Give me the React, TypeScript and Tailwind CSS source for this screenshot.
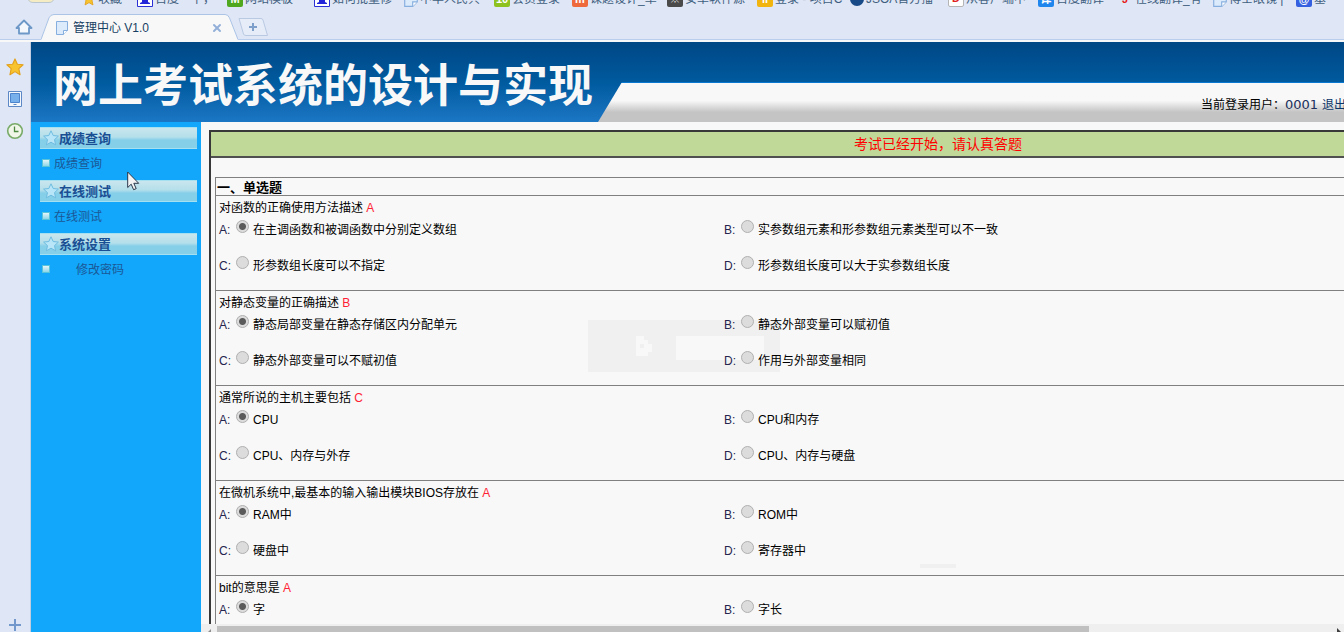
import type { ReactNode } from "react";
import { X } from "lucide-react";

interface Bookmark {
  label: string;
  width: string;
  icon: ReactNode;
}

interface Option {
  key: string;
  text: string;
}

interface Question {
  id: string;
  title: string;
  answer: string;
  options: Option[];
}

function StarIcon({ className = "" }: { className?: string }) {
  return (
    <svg viewBox="0 0 16 16" className={className} aria-hidden="true">
      <path
        d="M8 .8l2.1 4.7 5.1.5-3.8 3.5 1.1 5.3L8 12.1l-4.5 2.7 1.1-5.3L.8 6l5.1-.5z"
        fill="#f7c32e"
        stroke="#e3a11c"
        strokeWidth="1"
        strokeLinejoin="round"
      />
    </svg>
  );
}

function PageIcon({ className = "" }: { className?: string }) {
  return (
    <svg viewBox="0 0 12 14" className={className} aria-hidden="true">
      <path d="M.5.5h11v9l-4 4h-7z" fill="#dcebfb" stroke="#86aede" />
      <path d="M11.500 9.500h-4v4" fill="#fff" stroke="#86aede" />
    </svg>
  );
}

function PawIcon() {
  return (
    <svg viewBox="0 0 16 16" className="h-4 w-4">
      <path d="M.5.5h15v15H.5z" fill="#fff" stroke="#2b2fd6" />
      <path d="M5 8h6v3l2 1v1H3v-1l2-1z" fill="#2326d8" />
    </svg>
  );
}

function SquareIcon({ bg, children }: { bg: string; children?: ReactNode }) {
  return (
    <span className={`flex h-4 w-4 items-end justify-center rounded-xs text-[11px] font-bold leading-4 ${bg}`}>
      {children}
    </span>
  );
}

const BOOKMARKS: Bookmark[] = [
  { label: "收藏", width: "w-[55px]", icon: <StarIcon className="h-4 w-3.5" /> },
  { label: "百度一下，", width: "w-[90px]", icon: <PawIcon /> },
  { label: "网站模板", width: "w-[87px]", icon: <SquareIcon bg="bg-[#4fa81e] text-white">M</SquareIcon> },
  { label: "如何批量修", width: "w-[90px]", icon: <PawIcon /> },
  { label: "中华人民共", width: "w-[90px]", icon: <PageIcon className="h-4 w-3.5" /> },
  { label: "会员登录", width: "w-[78px]", icon: <SquareIcon bg="bg-[#8dc21f] text-white">10</SquareIcon> },
  { label: "课题设计_单", width: "w-[95px]", icon: <SquareIcon bg="bg-[#ee6a3c] text-white">m</SquareIcon> },
  { label: "安卓软件源", width: "w-[90px]", icon: <SquareIcon bg="bg-[#4a4a4a] text-[#cfcfcf]">※</SquareIcon> },
  { label: "登录 - 项目C", width: "w-[93px]", icon: <SquareIcon bg="bg-[#f2b50f] text-white">ıı</SquareIcon> },
  { label: "JSOA官方播", width: "w-[98px]", icon: <span className="block h-3.5 w-3.5 rounded-full bg-[#174a86]" /> },
  { label: "从客户端中", width: "w-[90px]", icon: <SquareIcon bg="border border-[#b5b5b5] bg-white text-[#e02020]">D</SquareIcon> },
  { label: "百度翻译", width: "w-[79px]", icon: <SquareIcon bg="bg-[#1f86ee] text-white">译</SquareIcon> },
  { label: "在线翻译_有", width: "w-[96px]", icon: <SquareIcon bg="text-[#e61c1c]">J</SquareIcon> },
  { label: "博士眼镜 |", width: "w-[83px]", icon: <PageIcon className="h-4 w-3.5" /> },
  { label: "基", width: "w-[48px]", icon: <SquareIcon bg="bg-[#3560e0] text-white">@</SquareIcon> },
];

const MENU = [
  { title: "成绩查询", item: "成绩查询", indent: "pl-1" },
  { title: "在线测试", item: "在线测试", indent: "pl-1" },
  { title: "系统设置", item: "修改密码", indent: "pl-[26px]" },
];

const QUESTIONS: Question[] = [
  {
    id: "q1",
    title: "对函数的正确使用方法描述",
    answer: "A",
    options: [
      { key: "A", text: "在主调函数和被调函数中分别定义数组" },
      { key: "B", text: "实参数组元素和形参数组元素类型可以不一致" },
      { key: "C", text: "形参数组长度可以不指定" },
      { key: "D", text: "形参数组长度可以大于实参数组长度" },
    ],
  },
  {
    id: "q2",
    title: "对静态变量的正确描述",
    answer: "B",
    options: [
      { key: "A", text: "静态局部变量在静态存储区内分配单元" },
      { key: "B", text: "静态外部变量可以赋初值" },
      { key: "C", text: "静态外部变量可以不赋初值" },
      { key: "D", text: "作用与外部变量相同" },
    ],
  },
  {
    id: "q3",
    title: "通常所说的主机主要包括",
    answer: "C",
    options: [
      { key: "A", text: "CPU" },
      { key: "B", text: "CPU和内存" },
      { key: "C", text: "CPU、内存与外存" },
      { key: "D", text: "CPU、内存与硬盘" },
    ],
  },
  {
    id: "q4",
    title: "在微机系统中,最基本的输入输出模块BIOS存放在",
    answer: "A",
    options: [
      { key: "A", text: "RAM中" },
      { key: "B", text: "ROM中" },
      { key: "C", text: "硬盘中" },
      { key: "D", text: "寄存器中" },
    ],
  },
  {
    id: "q5",
    title: "bit的意思是",
    answer: "A",
    options: [
      { key: "A", text: "字" },
      { key: "B", text: "字长" },
    ],
  },
];

function BrowserChrome() {
  return (
    <div className="shrink-0 bg-[#dfe6f5]">
      <nav className="flex h-3.5 items-end overflow-hidden pb-[7px]">
        <span className="mb-1 ml-[27px] mr-[27px] h-3 w-7 shrink-0 rounded-full border border-[#b9c6cf] bg-[#f6ecc4]" />
        {BOOKMARKS.map((b) => (
          <a
            key={b.label}
            href="#"
            className={`flex h-4 shrink-0 items-center gap-0.5 whitespace-nowrap text-[12px] leading-4 text-[#3f5f80] ${b.width}`}
          >
            {b.icon}
            {b.label}
          </a>
        ))}
      </nav>
      <div className="flex h-[26px] items-stretch border-b border-[#b9cdec]">
        <button type="button" aria-label="主页" className="flex w-[41px] items-center justify-end pr-2">
          <svg viewBox="0 0 18 16" className="h-4 w-[18px]">
            <path
              d="M9 1.5L1.5 9H4v5.500h10V9h2.500z"
              fill="#f4f8fd"
              stroke="#6d98c8"
              strokeWidth="1.800"
              strokeLinejoin="round"
            />
          </svg>
        </button>
        <div className="relative -mb-px flex w-[197px] items-center pl-[15px] pr-[15px] pt-0.5">
          <svg viewBox="0 0 197 27" className="absolute inset-0 h-full w-full" preserveAspectRatio="none">
            <path d="M0 26.500L8 4Q9.500 .5 13 .5H184Q187 .5 188.500 4L197 26.500V27H0z" fill="#f8f8f8" />
            <path d="M0 26.500L8 4Q9.500 .5 13 .5H184Q187 .5 188.500 4L197 26.500" fill="none" stroke="#a9c3e6" />
          </svg>
          <PageIcon className="relative h-3.5 w-3" />
          <span className="relative ml-[5px] flex-1 text-[12px] leading-4 text-[#173f63]">管理中心 V1.0</span>
          <button type="button" aria-label="关闭" className="relative text-[#94b0d8]">
            <X className="h-3 w-3" strokeWidth={4} />
          </button>
        </div>
        <button type="button" aria-label="新标签页" className="mt-1 h-[18px] w-[30px]">
          <svg viewBox="0 0 30 18" className="h-full w-full">
            <path d="M1 .5h22q1.500 0 2 1.500l4.500 15.500H8q-2 0-2.500-1.500z" fill="#e6ecf8" stroke="#b9c9e2" />
            <path d="M15 5v8M11 9h8" stroke="#7f9fcb" strokeWidth="2" />
          </svg>
        </button>
      </div>
      <div className="h-0.5 bg-[#f8f8f8]" />
    </div>
  );
}

function Rail() {
  return (
    <aside className="flex w-[31px] shrink-0 flex-col items-center border-r border-[#c3cde0] bg-[#dfe6f5] pt-4">
      <StarIcon className="h-[18px] w-[18px]" />
      <svg viewBox="0 0 14 16" className="mt-[15px] h-4 w-3.5">
        <path d="M.5.5h13v15H.5z" fill="#f4f8fd" stroke="#5c89c6" />
        <path d="M2.500 2.500h9v9h-9z" fill="#78b0ec" stroke="#4d84cc" />
        <path d="M5.500 13.500h3" stroke="#5c89c6" />
      </svg>
      <svg viewBox="0 0 18 18" className="mt-[15px] h-[18px] w-[18px]">
        <circle cx="9" cy="9" r="7.300" fill="#f0f6e8" stroke="#79ab69" strokeWidth="1.600" />
        <path d="M8.500 4.500v5h4" fill="none" stroke="#4d8a40" strokeWidth="1.300" />
      </svg>
      <svg viewBox="0 0 12 12" className="mb-px mt-auto h-3 w-3">
        <path d="M6 0v12M0 6h12" stroke="#7398cb" strokeWidth="2" />
      </svg>
    </aside>
  );
}

function Banner() {
  return (
    <header className="flex h-20 shrink-0 items-end overflow-hidden bg-linear-to-b from-[#004785] via-[#005a9e] to-[#1b76c4]">
      <h1 className="w-[567px] shrink-0 self-center whitespace-nowrap pl-[22px] pt-2.5 text-[45px] font-bold leading-[60px] text-[#f8f8f8]">
        网上考试系统的设计与实现
      </h1>
      <div className="flex h-10 flex-1 items-center justify-end overflow-hidden whitespace-nowrap border-t border-[#0878d0] bg-linear-to-b from-[#f8f8f8] from-45% via-[#dedede] via-60% to-[#c4c4c4] to-75% pt-1 text-[12px] leading-4 text-black [clip-path:polygon(24px_0,100%_0,100%_100%,0_100%)]">
        <span>当前登录用户：</span>
        <span className="font-['DejaVu_Sans','Noto_Sans_CJK_SC',sans-serif] text-[13px] text-[#20305c]">0001</span>
        <a href="#" className="-mr-0.5 ml-1 text-[#0b3468]">
          退出
        </a>
      </div>
    </header>
  );
}

function Sidebar() {
  return (
    <nav className="w-[170px] shrink-0 bg-[#12a7fb] pl-[9px] pr-1 pt-[5px]">
      {MENU.map((m) => (
        <section key={m.title}>
          <h2 className="flex h-[22px] items-center border-y border-y-[#a5e0f0] bg-linear-to-b from-[#c9e6ee] via-[#b4dfea] via-45% to-[#86cfe9] to-60% pl-[3px] pt-0.5 text-[13px] font-bold text-[#1a4f94]">
            <svg viewBox="0 0 16 16" className="mb-0.5 h-4 w-4">
              <path
                d="M8 .8l2.200 4.700 5.200.6-3.900 3.500 1.100 5.200L8 12.200l-4.600 2.600 1.100-5.200L.6 6.100l5.200-.6z"
                fill="#b8e6f8"
                stroke="#6fbce0"
                strokeLinejoin="round"
              />
            </svg>
            {m.title}
          </h2>
          <div className="flex h-[31px] items-center pb-px pl-[2px] text-[12px] leading-4">
            <span className="mb-0.5 h-2 w-2 border border-[#58c4dc] bg-linear-to-b from-[#e2f5f9] to-[#8ed6e8]" />
            <a href="#" className={`text-[#1c5796] ${m.indent}`}>
              {m.item}
            </a>
          </div>
        </section>
      ))}
    </nav>
  );
}

function QuestionBlock({ question }: { question: Question }) {
  return (
    <div role="radiogroup" aria-labelledby={question.id} className="border-t border-[#808080] pb-4 pl-[3px] pt-1">
      <p id={question.id}>
        {question.title} <span className="text-[#ff1f35]">{question.answer}</span>
      </p>
      <div className="mt-1.5 grid grid-cols-[505px_1fr] gap-y-5">
        {question.options.map((o) => (
          <label key={o.key} className="flex items-start">
            <span className="w-[17px] text-[#25254d]">{o.key}:</span>
            <input
              type="radio"
              name={question.id}
              defaultChecked={o.key === "A"}
              className="-mt-0.5 mr-1 h-[13px] w-[13px] shrink-0 appearance-none rounded-full border border-[#b0b0b0] bg-[#dcdcdc] checked:bg-[radial-gradient(circle,#5a5a5a_3px,#dcdcdc_4px)]"
            />
            {o.text}
          </label>
        ))}
      </div>
    </div>
  );
}

function ExamPanel() {
  return (
    <main className="flex min-w-0 flex-1 flex-col bg-[#f8f8f8]">
      <div className="relative min-h-0 flex-1 overflow-hidden pl-2 pt-2">
        {/* faint watermark left behind the questions */}
        <div className="absolute left-[387px] top-[198px] h-[52px] w-48 bg-[#f0f0f0]">
          <svg viewBox="0 0 16 20" className="absolute left-12 top-4 h-5 w-4">
            <path d="M0 0h8v4h4v4h4v8h-4v4H0z" fill="#f8f8f8" />
            <path d="M4 8h4v4H4z" fill="#f0f0f0" />
          </svg>
          <span className="absolute left-[88px] top-4 h-6 w-[88px] bg-[#f8f8f8]" />
        </div>
        <div className="absolute left-[719px] top-[442px] h-1 w-9 bg-[#f0f0f0]" />

        <div className="relative w-[1458px] border-2 border-[#383838]">
          <p className="border-b-2 border-[#505050] bg-[#c0d898] text-center text-[14px] leading-6 text-[#ff0000]">
            考试已经开始，请认真答题
          </p>
          <div className="pl-1 pt-[19px]">
            <div className="border border-[#808080] text-[12px] leading-4 text-black">
              <h2 className="h-[17px] pl-px text-[13px] font-bold leading-[19px]">一、单选题</h2>
              {QUESTIONS.map((q) => (
                <QuestionBlock key={q.id} question={q} />
              ))}
            </div>
          </div>
        </div>
      </div>
      <div className="flex h-2 shrink-0 items-end bg-[#efefef]">
        <svg viewBox="0 0 16 6" className="h-1.5 w-4 shrink-0">
          <path d="M10 3v3H7z" fill="#909090" />
        </svg>
        <div className="h-1.5 w-[76.3%] bg-[#c0c0c0]" />
        <svg viewBox="0 0 16 6" className="ml-auto h-1.5 w-4 shrink-0">
          <path d="M9 2v4h4z" fill="#404040" />
        </svg>
      </div>
    </main>
  );
}

export default function App() {
  return (
    <div className="relative flex h-screen flex-col overflow-hidden bg-[#f8f8f8] font-['Liberation_Sans','Noto_Sans_CJK_SC',sans-serif]">
      <BrowserChrome />
      <div className="flex min-h-0 flex-1">
        <Rail />
        <div className="flex min-w-0 flex-1 flex-col">
          <Banner />
          <div className="flex min-h-0 flex-1">
            <Sidebar />
            <ExamPanel />
          </div>
        </div>
      </div>
      <svg viewBox="0 0 13 20" className="pointer-events-none absolute left-[127px] top-[171px] h-5 w-[13px]">
        <path
          d="M.7 1v15.500l3.500-3.300 2.400 5.500 2.600-1.100-2.400-5.300h4.900z"
          fill="#f4f4f4"
          stroke="#28364a"
          strokeWidth="1"
        />
      </svg>
    </div>
  );
}
